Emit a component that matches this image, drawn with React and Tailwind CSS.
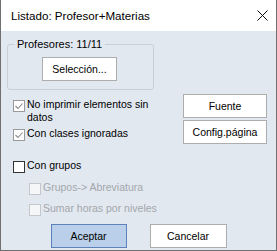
import React from "react";

const CheckBox = ({ checked, disabled }) => {
  const border = disabled ? "#c4c8cc" : checked ? "#9a9a9a" : "#333333";
  const bg = disabled ? "#f4f6f8" : "#ffffff";
  return (
    <svg width="12" height="12" viewBox="0 0 12 12" className="shrink-0">
      <rect x="0.5" y="0.5" width="11" height="11" fill={bg} stroke={border} />
      {checked && (
        <path d="M2.5 6 L5 8.5 L9.5 3.5" fill="none" stroke="#8a8a8a" strokeWidth="1.1" />
      )}
    </svg>
  );
};

const Option = ({ checked, disabled, children, className = "" }) => (
  <div className={`flex items-start gap-[2px] ${className}`}>
    <div className="mt-[2px]">
      <CheckBox checked={checked} disabled={disabled} />
    </div>
    <span className={disabled ? "text-[#a3a7ab]" : "text-black"}>{children}</span>
  </div>
);

const Button = ({ children, className = "", primary }) => (
  <button
    className={`h-[24px] border flex items-center justify-center text-black ${
      primary ? "bg-[#b9cfea] border-[#5b83ba]" : "bg-white border-[#adadad]"
    } ${className}`}
  >
    {children}
  </button>
);

export default function App() {
  return (
    <div
      className="w-[277px] h-[251px] flex flex-col bg-white border-x border-b border-[#707070] text-[10.5px] leading-[13px]"
      style={{ fontFamily: '"Liberation Sans", Arial, sans-serif' }}
    >
      {/* Title bar */}
      <div className="h-[31px] shrink-0 flex items-center justify-between pl-[10px] pr-[8px]">
        <span className="text-black text-[11.6px]">Listado: Profesor+Materias</span>
        <svg width="11" height="11" viewBox="0 0 11 11">
          <path d="M0.5 0.5 L10.5 10.5 M10.5 0.5 L0.5 10.5" stroke="#111" strokeWidth="1" />
        </svg>
      </div>

      {/* Body */}
      <div className="flex-1 bg-[#e2e8f0] pl-[6px] pr-[9px] flex flex-col">
        <fieldset className="mt-[6px] w-[147px] h-[53px] border border-[#c9cfd6] rounded-[3px]">
          <legend className="ml-[6px] px-[3px] leading-[14px] text-[11px]">Profesores: 11/11</legend>
          <Button className="ml-[34px] mt-[6px] w-[75px] h-[23px]">Selección...</Button>
        </fieldset>

        <div className="flex">
          <div className="flex flex-col pl-[6px] mt-[8px]">
            <Option checked>
              No imprimir elementos sin
              <br />
              datos
            </Option>
            <Option checked className="mt-[3px]">
              Con clases ignoradas
            </Option>
            <Option className="mt-[18px]">Con grupos</Option>
            <div className="pl-[16px]">
              <Option disabled className="mt-[8px]">
                Grupos-&gt; Abreviatura
              </Option>
              <Option disabled className="mt-[7px]">
                Sumar horas por niveles
              </Option>
            </div>
          </div>
          <div className="ml-auto mt-[4px] flex flex-col gap-[2px]">
            <Button className="w-[84px]">Fuente</Button>
            <Button className="w-[84px]">Config.página</Button>
          </div>
        </div>

        <div className="mt-[8px] flex justify-center gap-[23px] pl-[3px]">
          <Button primary className="w-[76px]">Aceptar</Button>
          <Button className="w-[77px]">Cancelar</Button>
        </div>
      </div>
    </div>
  );
}
